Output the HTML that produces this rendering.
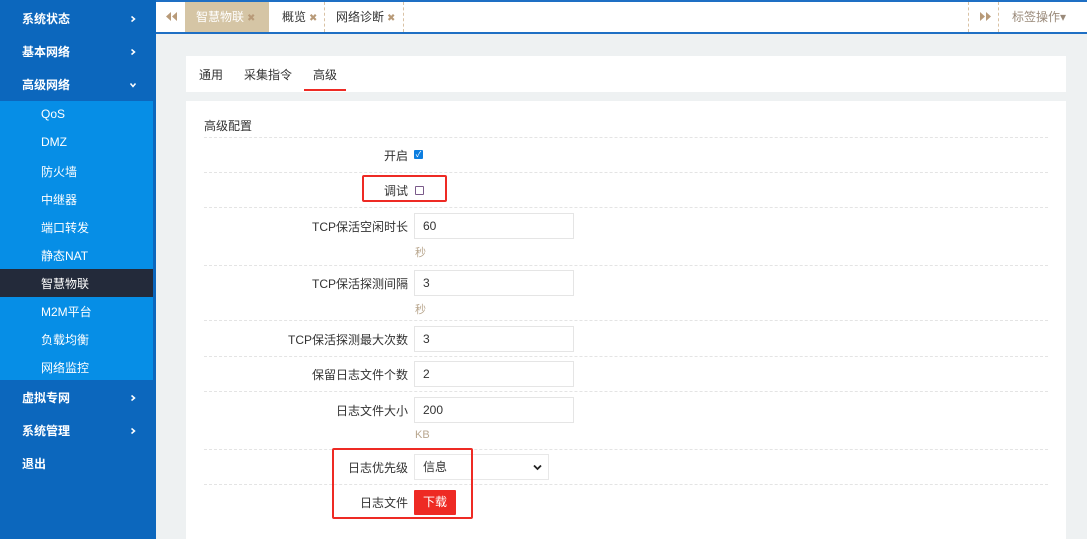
<!DOCTYPE html>
<html><head><meta charset="utf-8"><style>
*{box-sizing:border-box;margin:0;padding:0}
body{width:1087px;height:539px;overflow:hidden;background:#eef1f2;font-family:"Liberation Sans","Noto Sans CJK SC",sans-serif;font-size:12px;color:#333;position:relative}
.side{position:absolute;left:0;top:0;width:156px;height:539px;background:#0c67bd}
.m{position:absolute;left:22px;color:#fff;font-weight:bold;font-size:12px}
.ar{position:absolute;left:129px;width:8px;height:8px}
.sub{position:absolute;left:0;top:101px;width:153px;height:279px;background:#068ee6}
.s{position:absolute;left:41px;color:#fff;font-size:12px}
.act{position:absolute;left:0;top:269px;width:153px;height:28px;background:#232a3a}
.top{position:absolute;left:156px;top:0;width:931px;height:34px;background:#fff;border-top:2px solid #1e6fc4;border-bottom:2px solid #1e6fc4}
.tab{position:absolute;top:0;height:30px;line-height:30px;font-size:12px;color:#333}
.x{color:#b89a78;font-size:10px;margin-left:3px}
.vd{position:absolute;top:0;height:30px;border-left:1px dashed #d9c2a5}
.panel{position:absolute;left:186px;background:#fff}
.row{position:absolute;left:204px;width:844px;border-top:1px dashed #e4e4e4}
.lb{position:absolute;right:679px;font-size:12px;color:#333;text-align:right;white-space:nowrap}
.in{position:absolute;left:414px;width:160px;height:26px;border:1px solid #e5e5e5;padding-left:8px;line-height:24px;font-size:12px}
.u{position:absolute;left:415px;color:#b9a78f;font-size:11px}
.red{position:absolute;border:2px solid #ee2a24;border-radius:2px}
</style></head><body>
<div class="side">
<div class="m" style="top:10px">系统状态</div><svg class="ar" style="top:15px" viewBox="0 0 8 8"><path d="M2.5 1.5L5.5 4L2.5 6.5" stroke="#fff" stroke-width="1.5" fill="none"/></svg>
<div class="m" style="top:43px">基本网络</div><svg class="ar" style="top:48px" viewBox="0 0 8 8"><path d="M2.5 1.5L5.5 4L2.5 6.5" stroke="#fff" stroke-width="1.5" fill="none"/></svg>
<div class="m" style="top:76px">高级网络</div><svg class="ar" style="top:81px" viewBox="0 0 8 8"><path d="M1.5 2.5L4 5.5L6.5 2.5" stroke="#fff" stroke-width="1.5" fill="none"/></svg>
<div class="sub"></div><div class="act"></div>
<div class="s" style="top:107px">QoS</div>
<div class="s" style="top:135px">DMZ</div>
<div class="s" style="top:163px">防火墙</div>
<div class="s" style="top:191px">中继器</div>
<div class="s" style="top:219px">端口转发</div>
<div class="s" style="top:247px">静态NAT</div>
<div class="s" style="top:275px">智慧物联</div>
<div class="s" style="top:303px">M2M平台</div>
<div class="s" style="top:331px">负载均衡</div>
<div class="s" style="top:359px">网络监控</div>
<div class="m" style="top:389px">虚拟专网</div><svg class="ar" style="top:394px" viewBox="0 0 8 8"><path d="M2.5 1.5L5.5 4L2.5 6.5" stroke="#fff" stroke-width="1.5" fill="none"/></svg>
<div class="m" style="top:422px">系统管理</div><svg class="ar" style="top:427px" viewBox="0 0 8 8"><path d="M2.5 1.5L5.5 4L2.5 6.5" stroke="#fff" stroke-width="1.5" fill="none"/></svg>
<div class="m" style="top:455px">退出</div>
</div>
<div class="top">
<svg style="position:absolute;left:10px;top:10px" width="12" height="9" viewBox="0 0 12 9"><path d="M5 0L0 4.5L5 9ZM11 0L6 4.5L11 9Z" fill="#b89a78"/></svg>
<div class="vd" style="left:29px"></div>
<div class="tab" style="left:29px;width:84px;background:#d5c5a5;color:#fff;padding-left:11px">智慧物联<span class="x">✖</span></div>
<div class="tab" style="left:126px">概览<span class="x">✖</span></div>
<div class="vd" style="left:168px"></div>
<div class="tab" style="left:180px">网络诊断<span class="x">✖</span></div>
<div class="vd" style="left:247px"></div>
<div class="vd" style="left:812px"></div>
<svg style="position:absolute;left:823px;top:10px" width="12" height="9" viewBox="0 0 12 9"><path d="M1 0L6 4.5L1 9ZM7 0L12 4.5L7 9Z" fill="#b89a78"/></svg>
<div class="vd" style="left:842px"></div>
<div class="tab" style="left:856px;color:#9a8a7a">标签操作▾</div>
</div>
<div class="panel" style="top:56px;width:880px;height:36px"></div>
<div style="position:absolute;left:199px;top:66px">通用</div>
<div style="position:absolute;left:244px;top:66px">采集指令</div>
<div style="position:absolute;left:313px;top:66px">高级</div>
<div style="position:absolute;left:304px;top:89px;width:42px;height:2px;background:#ee2a24"></div>
<div class="panel" style="top:101px;width:880px;height:438px"></div>
<div style="position:absolute;left:204px;top:117px">高级配置</div>
<div class="row" style="top:137px"></div>
<div class="lb" style="top:147px">开启</div>
<div style="position:absolute;left:414px;top:150px;width:9px;height:9px;background:#0c7ee0;border-radius:1px;color:#fff;font-size:8px;line-height:9px;text-align:center">✓</div>
<div class="row" style="top:172px"></div>
<div class="lb" style="top:182px">调试</div>
<div style="position:absolute;left:415px;top:186px;width:9px;height:9px;border:1px solid #7a5a8a;border-radius:1px"></div>
<div class="red" style="left:362px;top:175px;width:85px;height:27px"></div>
<div class="row" style="top:207px"></div>
<div class="lb" style="top:218px">TCP保活空闲时长</div><div class="in" style="top:213px">60</div><div class="u" style="top:244px">秒</div>
<div class="row" style="top:265px"></div>
<div class="lb" style="top:275px">TCP保活探测间隔</div><div class="in" style="top:270px">3</div><div class="u" style="top:301px">秒</div>
<div class="row" style="top:320px"></div>
<div class="lb" style="top:331px">TCP保活探测最大次数</div><div class="in" style="top:326px">3</div>
<div class="row" style="top:356px"></div>
<div class="lb" style="top:366px">保留日志文件个数</div><div class="in" style="top:361px">2</div>
<div class="row" style="top:391px"></div>
<div class="lb" style="top:402px">日志文件大小</div><div class="in" style="top:397px">200</div><div class="u" style="top:429px">KB</div>
<div class="row" style="top:449px"></div>
<div class="lb" style="top:459px">日志优先级</div>
<div class="in" style="top:454px;width:135px;border-color:#e8e8e8">信息<svg style="position:absolute;right:6px;top:9px" width="9" height="7" viewBox="0 0 9 7"><path d="M1 1.5L4.5 5L8 1.5" stroke="#222" stroke-width="1.8" fill="none"/></svg></div>
<div class="row" style="top:484px"></div>
<div class="lb" style="top:494px">日志文件</div>
<div style="position:absolute;left:414px;top:490px;width:42px;height:25px;background:#ee2a24;color:#fff;text-align:center;line-height:25px;border-radius:1px">下载</div>
<div class="red" style="left:332px;top:448px;width:141px;height:71px"></div>
</body></html>
